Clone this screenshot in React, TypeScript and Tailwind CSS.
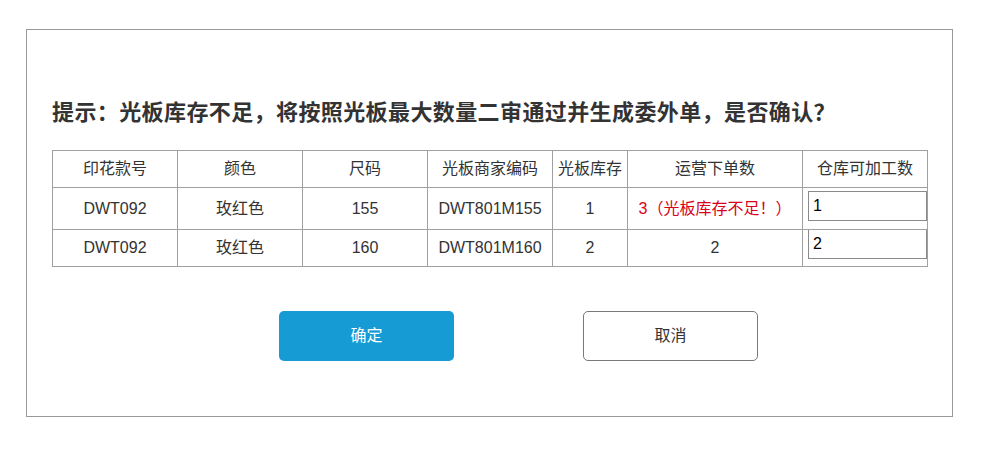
import React from 'react';

const font = { fontFamily: '"Liberation Sans", "Noto Sans CJK SC", sans-serif' };

const rows = [
  { sku: 'DWT092', color: '玫红色', size: '155', code: 'DWT801M155', stock: '1', order: '3（光板库存不足！）', short: true, qty: '1' },
  { sku: 'DWT092', color: '玫红色', size: '160', code: 'DWT801M160', stock: '2', order: '2', short: false, qty: '2' },
];

const headers = ['印花款号', '颜色', '尺码', '光板商家编码', '光板库存', '运营下单数', '仓库可加工数'];
const widths = ['w-[125px]', 'w-[125px]', 'w-[125px]', 'w-[125px]', 'w-[75px]', 'w-[175px]', 'w-[124px]'];

export default function App() {
  return (
    <div className="w-[981px] h-[449px] bg-white pt-[29px] pl-[26px]" style={font}>
      <div className="w-[927px] h-[388px] border border-[#999999] pl-[25px] pt-[67px]">
        <h1 className="text-[22px] leading-[32px] font-bold text-[#333333] tracking-[0.4px]">
          提示：光板库存不足，将按照光板最大数量二审通过并生成委外单，是否确认？
        </h1>
        <table className="mt-[21px] border-collapse text-[16px] text-[#333333] table-fixed">
          <thead>
            <tr className="h-[37px]">
              {headers.map((h, i) => (
                <th key={h} className={`${widths[i]} border border-[#a0a0a0] font-normal text-center p-0`}>
                  {h}
                </th>
              ))}
            </tr>
          </thead>
          <tbody>
            {rows.map((r, idx) => (
              <tr key={r.code} className={idx === 0 ? 'h-[42px]' : 'h-[37px]'}>
                <td className="border border-[#a0a0a0] text-center p-0">{r.sku}</td>
                <td className="border border-[#a0a0a0] text-center p-0">{r.color}</td>
                <td className="border border-[#a0a0a0] text-center p-0">{r.size}</td>
                <td className="border border-[#a0a0a0] text-center p-0">{r.code}</td>
                <td className="border border-[#a0a0a0] text-center p-0">{r.stock}</td>
                <td className={`border border-[#a0a0a0] text-center p-0 ${r.short ? 'text-[#d9001b]' : ''}`}>
                  {r.order}
                </td>
                <td className="border border-[#a0a0a0] p-0 align-top">
                  <input
                    defaultValue={r.qty}
                    className={`block w-[119px] h-[30px] ml-[5px] border border-[#8a8a8a] px-[4px] text-[16px] text-black outline-none ${idx === 0 ? 'mt-[3px]' : '-mt-[1px]'}`}
                    style={font}
                  />
                </td>
              </tr>
            ))}
          </tbody>
        </table>
        <div className="flex gap-[129px] pl-[227px] mt-[44px]">
          <button className="w-[175px] h-[50px] rounded-[5px] bg-[#169bd5] text-white text-[16px]">确定</button>
          <button className="w-[175px] h-[50px] rounded-[5px] border border-[#797979] bg-white text-[#333333] text-[16px]">取消</button>
        </div>
      </div>
    </div>
  );
}
